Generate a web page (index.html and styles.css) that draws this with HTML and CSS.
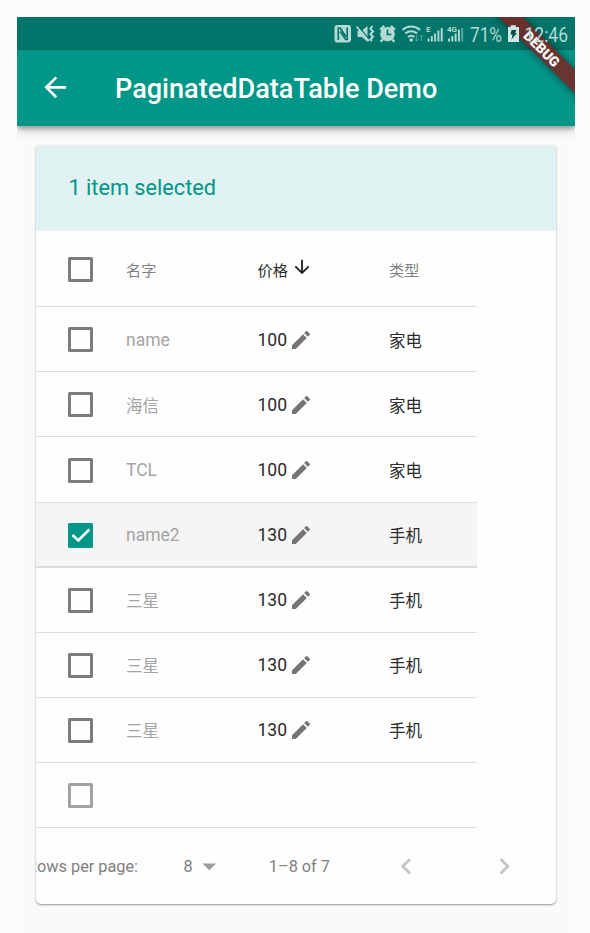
FILE: index.html
```
<!DOCTYPE html>
<html lang="zh">
<head>
    <meta charset="UTF-8">
    <meta name="viewport" content="width=device-width, initial-scale=1.0">
    <title>PaginatedDataTable Demo</title>
    <link rel="stylesheet" href="styles.css">
</head>
<body>
    <div class="phone">
        <div class="status-bar">
            <svg class="status-icons" width="241" height="33" viewBox="334 17 241 33">
                <!-- nfc -->
                <rect x="334.500" y="25" width="16.500" height="17.500" rx="3" fill="#b5d9d4"/>
                <path d="M338.300 40V28h2l5.500 8.500M347.200 27.500v12h-1.500l-5.500-8" fill="none" stroke="#00756a" stroke-width="1.700"/>
                <!-- muted, vibrate -->
                <path d="M357.500 30.500h4.500l5.500-4.500v16l-5.500-5h-4.500z" fill="#b5d9d4"/>
                <path d="M357.500 25.500l12 14" stroke="#00756a" stroke-width="1.400"/>
                <path d="M356.500 26.500l12.500 14.500" stroke="#b5d9d4" stroke-width="1.700"/>
                <path d="M372.500 26l-2 2.700 2.500 2.700-2.500 2.700 2.500 2.700-2.500 2.700 1.500 1.500" fill="none" stroke="#b5d9d4" stroke-width="2"/>
                <!-- alarm -->
                <circle cx="387.500" cy="34.200" r="7.300" fill="#b5d9d4"/>
                <path d="M380.200 29.800l4-3.800M390.800 26l4 3.800M382.500 39.500l-1.800 2.300M392.500 39.500l1.800 2.300" stroke="#b5d9d4" stroke-width="2.500"/>
                <path d="M387.500 29.500v5h4" fill="none" stroke="#00756a" stroke-width="1.700"/>
                <!-- wifi -->
                <g fill="none" stroke="#b5d9d4" stroke-width="2">
                    <path d="M402.500 30a13 13 0 0 1 17.500 0M405.300 33.500a9 9 0 0 1 11.800 0M408 37a5 5 0 0 1 6.400 0"/>
                </g>
                <circle cx="411.200" cy="40" r="1.800" fill="#b5d9d4"/>
                <path d="M416.700 35v6m-1.500-1.500l1.500 1.500 1.500-1.500M421.500 41v-6m-1.500 1.500l1.500-1.500 1.500 1.500" fill="none" stroke="#5ba69e" stroke-width="1"/>
                <!-- signals -->
                <text class="net" x="426" y="32">E</text>
                <path d="M428.500 41.500v-3M431.800 41.500v-5.500M435.100 41.500v-8M438.400 41.500v-11M441.700 41.500v-13.500" stroke="#b5d9d4" stroke-width="1.900"/>
                <text class="net" x="447" y="32" textLength="10" lengthAdjust="spacingAndGlyphs">4G</text>
                <path d="M449 41.500v-3M452.300 41.500v-5.500M455.600 41.500v-8M458.900 41.500v-12" stroke="#b5d9d4" stroke-width="1.900"/>
                <path d="M462.200 41.500v-13.500" stroke="#5ba69e" stroke-width="1.900"/>
                <text class="clock" x="470" y="41.500" textLength="32" lengthAdjust="spacingAndGlyphs">71%</text>
                <!-- battery -->
                <path d="M508 27h2.800v-1.800h5v1.800h3.200v15h-11z" fill="#d0e8e5"/>
                <path d="M511.500 30h5l-1.500 3h2l-5.500 6.500 1-5h-2z" fill="#084d46"/>
                <text class="clock" x="524.500" y="41.500" textLength="43.500" lengthAdjust="spacingAndGlyphs">12:46</text>
            </svg>
        </div>
        <div class="app-bar">
            <svg class="back" width="32.600" height="32.600" viewBox="0 0 24 24"><path d="M20 11H7.830l5.590-5.590L12 4l-8 8 8 8 1.410-1.410L7.830 13H20v-2z" fill="#fff"/></svg>
            <h1 class="title">PaginatedDataTable Demo</h1>
        </div>
        <div class="banner"><span class="banner-text">DEBUG</span></div>

        <div class="card">
            <div class="card-header">1 item selected</div>
            <div class="table">
                <div class="row head">
                    <span class="check"></span>
                    <span>名字</span>
                    <span class="price sorted">价格<svg class="sort" width="22" height="22" viewBox="0 0 24 24"><path d="M20 12l-1.410-1.410L13 16.170V4h-2v12.170l-5.580-5.590L4 12l8 8 8-8z"/></svg></span>
                    <span>类型</span>
                </div>
                <div id="rows"></div>
            </div>
            <div class="footer">
                <span class="per-page">Rows per page:</span>
                <span class="page-size">8</span>
                <svg class="dropdown" width="32.600" height="32.600" viewBox="0 0 24 24"><path d="M7 10l5 5 5-5z" fill="#9e9e9e"/></svg>
                <span class="range">1–8 of 7</span>
                <svg class="prev" width="32.600" height="32.600" viewBox="0 0 24 24"><path d="M15.410 7.410L14 6l-6 6 6 6 1.410-1.410L10.830 12z" fill="#c4c4c4"/></svg>
                <svg class="next" width="32.600" height="32.600" viewBox="0 0 24 24"><path d="M10 6L8.590 7.410 13.170 12l-4.580 4.590L10 18l6-6z" fill="#c4c4c4"/></svg>
            </div>
        </div>
    </div>
    <script>
        const goods = [
            { name: 'name', price: 100, type: '家电' },
            { name: '海信', price: 100, type: '家电' },
            { name: 'TCL', price: 100, type: '家电' },
            { name: 'name2', price: 130, type: '手机', selected: true },
            { name: '三星', price: 130, type: '手机' },
            { name: '三星', price: 130, type: '手机' },
            { name: '三星', price: 130, type: '手机' }
        ];
        const rowsPerPage = 8;
        const editIcon = '<svg class="edit" width="24" height="24" viewBox="0 0 24 24"><path d="M3 17.250V21h3.750L17.810 9.940l-3.750-3.750L3 17.250zM20.710 7.040a1 1 0 0 0 0-1.410l-2.340-2.340a1 1 0 0 0-1.410 0l-1.830 1.830 3.750 3.750 1.830-1.830z"/></svg>';
        const tick = '<svg class="tick" width="25" height="25" viewBox="0 0 25 25"><path d="M4.500 12l5.800 5.500L21.300 6.500" fill="none" stroke="#fff" stroke-width="2.600"/></svg>';
        const rows = document.getElementById('rows');
        for (let i = 0; i < rowsPerPage; i++) {
            const item = goods[i];
            const row = document.createElement('div');
            row.className = 'row';
            if (!item) {
                row.classList.add('empty');
                row.innerHTML = '<span class="check"></span>';
            } else {
                if (item.selected) {
                    row.classList.add('selected');
                }
                const isChinese = /[\u4e00-\u9fa5]/.test(item.name);
                row.innerHTML = `<span class="check">${item.selected ? tick : ''}</span>
                    <span class="name${isChinese ? ' cjk' : ''}">${item.name}</span>
                    <span class="price">${item.price}${editIcon}</span>
                    <span class="cjk">${item.type}</span>`;
            }
            rows.appendChild(row);
        }
    </script>
</body>
</html>
```
FILE: styles.css
```
body {
    margin: 0;
    padding: 17px 15px 0 17px;
    height: 933px;
    box-sizing: border-box;
    overflow: hidden;
    background: #fcfcfc;
    font-family: Roboto, "Noto Sans CJK SC", sans-serif;
}
.phone {
    position: relative;
    height: 916px;
    background: #fafafa;
    overflow: hidden;
}
.status-bar {
    height: 33px;
    background: #00756a;
    display: flex;
    justify-content: flex-end;
}
/* system icons stay above the debug ribbon */
.status-icons {
    position: relative;
    z-index: 2;
}
.net {
    font-size: 8px;
    font-weight: 700;
    fill: #b5d9d4;
}
.clock {
    font-size: 20px;
    fill: #b5d9d4;
}
.app-bar {
    height: 75.500px;
    background: #009688;
    box-shadow: 0 3px 5px rgba(0, 0, 0, 0.3), 0 5px 11px rgba(0, 0, 0, 0.12);
    display: flex;
    align-items: center;
    padding-left: 22px;
}
.title {
    margin: 2px 0 0 43.400px;
    font-size: 27.100px;
    font-weight: 500;
    color: #fff;
    white-space: nowrap;
}
/* debug ribbon over the top right corner */
.banner {
    position: absolute;
    top: 22.500px;
    right: -42px;
    width: 150px;
    height: 17.300px;
    background: rgba(125, 35, 35, 0.840);
    box-shadow: 0 0 8px rgba(0, 0, 0, 0.5);
    transform: rotate(45deg);
    display: flex;
    align-items: center;
    justify-content: center;
}
.banner-text {
    font-size: 13.800px;
    font-weight: 900;
    color: #fff;
}
.card {
    width: 520px;
    height: 759.500px;
    margin: 19px 0 0 19px;
    background: #fefefe;
    border-radius: 3px 3px 5px 5px;
    box-shadow: 0 1px 2px rgba(0, 0, 0, 0.4);
    overflow: hidden;
}
.card-header {
    height: 86.800px;
    line-height: 86.800px;
    padding-left: 32.500px;
    background: #e0f2f1;
    color: #009688;
    font-size: 21.700px;
    border-radius: 3px 3px 0 0;
}
.table {
    width: 441px;
}
.row {
    display: grid;
    grid-template-columns: 58px 131.500px 131.500px 88px;
    align-items: center;
    height: 65.100px;
    box-sizing: border-box;
    padding: 1px 0 0 32px;
    border-bottom: 1px solid #dedede;
    color: #2b2b2b;
    font-size: 17.500px;
}
.head {
    height: 76px;
    font-size: 15.200px;
    color: #808080;
}
.selected {
    background: #f5f5f5;
    border-bottom: 2px solid #dcdcdc;
    padding-top: 2px;
}
.check {
    width: 25px;
    height: 25px;
    box-sizing: border-box;
    border: 3px solid #7c7c7c;
    border-radius: 1.500px;
}
.selected .check {
    border: 0;
    background: #009688;
}
.empty .check {
    border-color: #a2a2a2;
}
.tick {
    display: block;
}
.cjk {
    font-size: 16.500px;
}
.name {
    color: #a4a4a4;
}
.price {
    display: flex;
    align-items: center;
}
.sorted {
    color: #2b2b2b;
}
.sort {
    margin: -4px 0 0 3px;
    fill: #212121;
}
.edit {
    margin-left: 2px;
    fill: #757575;
}
.footer {
    height: 76px;
    display: flex;
    align-items: center;
    font-size: 16.300px;
    color: #808080;
}
.per-page {
    margin-left: -9px;
    white-space: nowrap;
}
.page-size {
    margin-left: 45.500px;
}
.range {
    margin-left: 43.500px;
}
.prev {
    margin-left: 60.500px;
}
.next {
    margin-left: 65px;
}
```
